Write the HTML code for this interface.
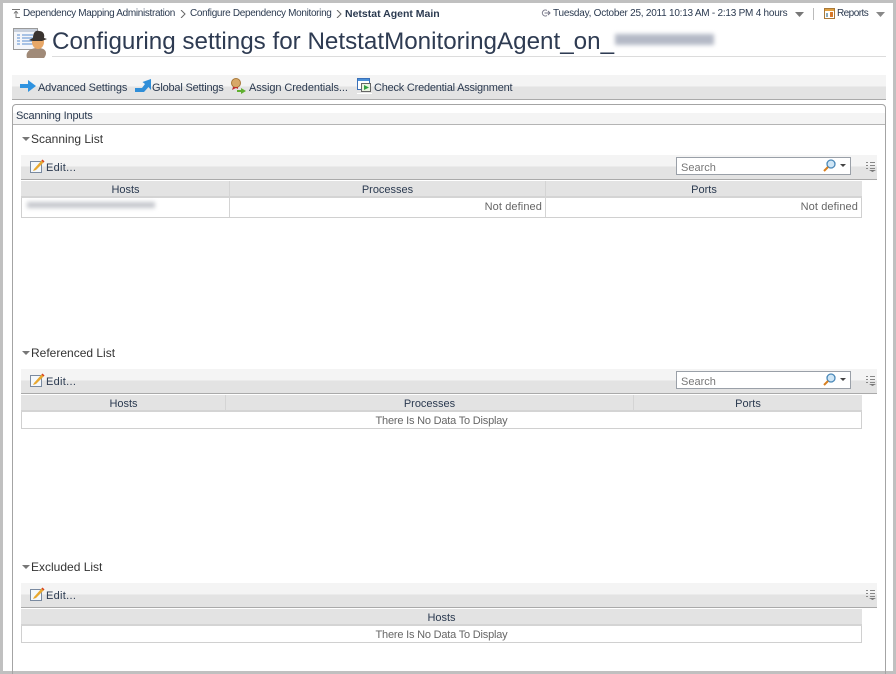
<!DOCTYPE html>
<html><head><meta charset="utf-8"><style>
html,body{margin:0;padding:0;background:#fff}
#p{position:relative;width:896px;height:674px;overflow:hidden;background:#fff;font-family:"Liberation Sans",sans-serif;font-size:11px;color:#2b3a50}
#p div,#p svg{position:absolute}
.t{white-space:nowrap;line-height:14px;height:14px}
.n{font-size:10px;letter-spacing:-.33px}
.m{letter-spacing:-.15px}
.e{letter-spacing:.3px}
.g{background:#c0c0c0}
.bar{background:linear-gradient(#f4f4f4 0,#f4f4f4 11px,#e3e3e3 12px,#e3e3e3 100%);border-bottom:1px solid #aaa}
.th{background:#e3e3e3;border-bottom:2px solid #d4d4d4;height:15px}
.c{text-align:center}
.h{font-size:12px;color:#333}
.d{color:#666;letter-spacing:.1px}
.z{color:#666;letter-spacing:-.2px}
.s{background:#fff;border:1px solid #9aa0a8;width:173px;height:16px}
.b{filter:blur(2px);background:#a9adb8}
</style></head><body><div id="p">
<div class="g" style="left:0;top:0;width:896px;height:3px"></div>
<div class="g" style="left:0;top:0;width:3px;height:674px"></div>
<div class="g" style="left:893px;top:0;width:3px;height:674px"></div>
<div class="g" style="left:0;top:671px;width:896px;height:3px"></div>

<svg style="left:12px;top:9px" width="9" height="9" viewBox="0 0 9 9"><path d="M0 .5H8M4 2L2 4.500M4 2L6 4.500M4 2V8.500H8" fill="none" stroke="#777" stroke-width="1"/></svg>
<div class="t n" style="left:23px;top:7px">Dependency Mapping Administration</div>
<svg style="left:180px;top:10px" width="6" height="8"><path d="M1 0L5 4L1 8" fill="none" stroke="#666"/></svg>
<div class="t n" style="left:190px;top:7px">Configure Dependency Monitoring</div>
<svg style="left:336px;top:10px" width="6" height="8"><path d="M1 0L5 4L1 8" fill="none" stroke="#666"/></svg>
<div class="t" style="left:345px;top:7px;font-weight:bold;font-size:10.500px">Netstat Agent Main</div>

<svg style="left:541px;top:9px" width="10" height="9"><path d="M6 1.500A3 3 0 1 0 6 6.500M3.500 4H9M7 2L9 4L7 6" fill="none" stroke="#778" stroke-width="1"/></svg>
<div class="t n" style="left:553px;top:7px;letter-spacing:-.235px">Tuesday, October 25, 2011 10:13 AM - 2:13 PM 4 hours</div>
<svg style="left:795px;top:12px" width="9" height="5"><path d="M0 0H9L4.500 5Z" fill="#777"/></svg>
<div style="left:813px;top:8px;width:1px;height:12px;background:#bbb"></div>
<svg style="left:824px;top:8px" width="11" height="11"><rect x=".5" y=".5" width="10" height="10" fill="#fff" stroke="#a87838"/><rect x="1" y="1" width="9" height="2" fill="#e0a040"/><rect x="2" y="5" width="2" height="4" fill="#8ab"/><rect x="6" y="4" width="3" height="5" fill="#d87828"/></svg>
<div class="t n" style="left:837px;top:7px;letter-spacing:-.55px">Reports</div>
<svg style="left:876px;top:12px" width="9" height="5"><path d="M0 0H9L4.500 5Z" fill="#888"/></svg>

<svg style="left:12px;top:27px" width="36" height="32" viewBox="0 0 36 32">
<rect x="1.500" y="1.500" width="24" height="21" fill="#f4f6fa" stroke="#9a9a9a"/><rect x="2" y="2" width="23" height="3" fill="#c8d0dc"/>
<path d="M5 8H8M10 8H21M5 11H8M10 11H21M5 14H8M10 14H21M5 17H8M10 17H21" stroke="#5a8fd0"/>
<path d="M15 31C13 25 18 21 26 21C34 21 36 26 32 31Z" fill="#a08a78"/>
<ellipse cx="26" cy="15" rx="6" ry="7" fill="#e8a868"/>
<path d="M17 13L21 11C21 5 24 3 27 4C31 4 33 7 32 11L35 12L30 14H21Z" fill="#3a3430"/></svg>

<div class="t" style="left:52px;top:27px;height:30px;line-height:30px;font-size:24.200px;color:#2e3b52">Configuring settings for NetstatMonitoringAgent_on_</div>
<div class="b" style="left:615px;top:34px;width:99px;height:11px;background:#b4b9c6"></div>
<div style="left:52px;top:56px;width:834px;height:1px;background:#dcdcdc"></div>

<div class="bar" style="left:12px;top:75px;width:874px;height:24px"></div>
<svg style="left:20px;top:79px" width="16" height="14"><path d="M0 5H8V1L16 7L8 13V9H0Z" fill="#2f93e0"/></svg>
<div class="t m" style="left:38px;top:81px">Advanced Settings</div>
<svg style="left:135px;top:79px" width="16" height="14"><path d="M0 9H7L10 5L7.500 3L16 0V11L13.500 8L9 13H0Z" fill="#2f8ed8"/></svg>
<div class="t m" style="left:152px;top:81px;letter-spacing:-.2px">Global Settings</div>
<svg style="left:231px;top:78px" width="16" height="16"><circle cx="5" cy="5" r="4.500" fill="#d8a868" stroke="#a87838"/><path d="M2 9L1 12L5 10L7 11V9Z" fill="#c03030"/><path d="M6 12H10V10L15 13L10 16V14H6Z" fill="#60b030"/></svg>
<div class="t m" style="left:249px;top:81px;letter-spacing:-.1px">Assign Credentials...</div>
<svg style="left:357px;top:78px" width="15" height="16"><rect x=".5" y=".5" width="12" height="11" fill="#fff" stroke="#3a70b8"/><rect x="1" y="1" width="11" height="2" fill="#4a90d8"/><rect x="4.500" y="5.500" width="9" height="8" fill="#eaf4e0" stroke="#666"/><path d="M7 7L12 9.500L7 12Z" fill="#30a040"/><rect x="0" y="15" width="15" height="1" fill="#fff"/></svg>
<div class="t m" style="left:374px;top:81px;letter-spacing:-.22px">Check Credential Assignment</div>

<div style="left:12px;top:104px;width:872px;height:580px;border:1px solid #a4a4a4;border-radius:4px 4px 0 0"></div>
<div style="left:13px;top:113px;width:872px;height:11px;background:#f4f4f4"></div>
<div style="left:13px;top:124px;width:872px;height:1px;background:#b4b4b4"></div>
<div class="t m" style="left:16px;top:109px">Scanning Inputs</div>

<svg style="left:22px;top:137px" width="8" height="4"><path d="M0 0H8L4 4Z" fill="#777"/></svg>
<div class="t h" style="left:31px;top:132px">Scanning List</div>
<div class="bar" style="left:21px;top:155px;width:856px;height:24px"></div>
<svg style="left:30px;top:159px" width="15" height="15"><rect x=".5" y="2.500" width="11" height="11" fill="#f4f8fc" stroke="#7a8aa0"/><path d="M4 10L12 1L14 3L6 11L3 12Z" fill="#e8a830"/><path d="M12 1L14 3" stroke="#d84020" stroke-width="1.500"/></svg>
<div class="t e" style="left:46px;top:161px">Edit...</div>
<div class="s" style="left:676px;top:157px"></div>
<div class="t" style="left:681px;top:161px;color:#777">Search</div>
<svg style="left:823px;top:159px" width="13" height="13"><circle cx="8" cy="5" r="4" fill="#cfe6f6" stroke="#4a88b8" stroke-width="1.300"/><path d="M5 8L1 12" stroke="#d88020" stroke-width="2"/></svg>
<svg style="left:840px;top:164px" width="6" height="3"><path d="M0 0H6L3 3Z" fill="#444"/></svg>
<svg style="left:866px;top:162px" width="10" height="10"><path d="M0 .5H2M4 .5H9M0 3.500H2M4 3.500H9M0 6.500H2M4 6.500H9" stroke="#888"/><path d="M3 8H10L6.500 10Z" fill="#777"/></svg>

<div class="th" style="left:21px;top:181px;width:841px"></div>
<div style="left:229px;top:181px;width:1px;height:36px;background:#d4d4d4"></div>
<div style="left:545px;top:181px;width:1px;height:36px;background:#d4d4d4"></div>
<div class="t c" style="left:22px;top:183px;width:207px">Hosts</div>
<div class="t c" style="left:230px;top:183px;width:315px">Processes</div>
<div class="t c" style="left:546px;top:183px;width:316px">Ports</div>
<div style="left:21px;top:198px;width:1px;height:20px;background:#d0d0d0"></div>
<div style="left:861px;top:198px;width:1px;height:20px;background:#d0d0d0"></div>
<div style="left:21px;top:217px;width:841px;height:1px;background:#d0d0d0"></div>
<div class="b" style="left:27px;top:202px;width:128px;height:6px;background:#c4c6cc"></div>
<div class="t d" style="left:400px;top:200px;width:142px;text-align:right">Not defined</div>
<div class="t d" style="left:716px;top:200px;width:142px;text-align:right">Not defined</div>

<svg style="left:22px;top:351px" width="8" height="4"><path d="M0 0H8L4 4Z" fill="#777"/></svg>
<div class="t h" style="left:31px;top:346px">Referenced List</div>
<div class="bar" style="left:21px;top:369px;width:856px;height:24px"></div>
<svg style="left:30px;top:373px" width="15" height="15"><rect x=".5" y="2.500" width="11" height="11" fill="#f4f8fc" stroke="#7a8aa0"/><path d="M4 10L12 1L14 3L6 11L3 12Z" fill="#e8a830"/><path d="M12 1L14 3" stroke="#d84020" stroke-width="1.500"/></svg>
<div class="t e" style="left:46px;top:375px">Edit...</div>
<div class="s" style="left:676px;top:371px"></div>
<div class="t" style="left:681px;top:375px;color:#777">Search</div>
<svg style="left:823px;top:373px" width="13" height="13"><circle cx="8" cy="5" r="4" fill="#cfe6f6" stroke="#4a88b8" stroke-width="1.300"/><path d="M5 8L1 12" stroke="#d88020" stroke-width="2"/></svg>
<svg style="left:840px;top:378px" width="6" height="3"><path d="M0 0H6L3 3Z" fill="#444"/></svg>
<svg style="left:866px;top:376px" width="10" height="10"><path d="M0 .5H2M4 .5H9M0 3.500H2M4 3.500H9M0 6.500H2M4 6.500H9" stroke="#888"/><path d="M3 8H10L6.500 10Z" fill="#777"/></svg>

<div class="th" style="left:21px;top:395px;width:841px"></div>
<div style="left:225px;top:395px;width:1px;height:15px;background:#d4d4d4"></div>
<div style="left:633px;top:395px;width:1px;height:15px;background:#d4d4d4"></div>
<div class="t c" style="left:22px;top:397px;width:203px">Hosts</div>
<div class="t c" style="left:226px;top:397px;width:407px">Processes</div>
<div class="t c" style="left:634px;top:397px;width:228px">Ports</div>
<div style="left:21px;top:412px;width:1px;height:17px;background:#d0d0d0"></div>
<div style="left:861px;top:412px;width:1px;height:17px;background:#d0d0d0"></div>
<div style="left:21px;top:428px;width:841px;height:1px;background:#d0d0d0"></div>
<div class="t c z" style="left:21px;top:414px;width:841px">There Is No Data To Display</div>

<svg style="left:22px;top:565px" width="8" height="4"><path d="M0 0H8L4 4Z" fill="#777"/></svg>
<div class="t h" style="left:31px;top:560px">Excluded List</div>
<div class="bar" style="left:21px;top:583px;width:856px;height:24px"></div>
<svg style="left:30px;top:587px" width="15" height="15"><rect x=".5" y="2.500" width="11" height="11" fill="#f4f8fc" stroke="#7a8aa0"/><path d="M4 10L12 1L14 3L6 11L3 12Z" fill="#e8a830"/><path d="M12 1L14 3" stroke="#d84020" stroke-width="1.500"/></svg>
<div class="t e" style="left:46px;top:589px">Edit...</div>
<svg style="left:866px;top:590px" width="10" height="10"><path d="M0 .5H2M4 .5H9M0 3.500H2M4 3.500H9M0 6.500H2M4 6.500H9" stroke="#888"/><path d="M3 8H10L6.500 10Z" fill="#777"/></svg>

<div class="th" style="left:21px;top:609px;width:841px"></div>
<div class="t c" style="left:21px;top:611px;width:841px">Hosts</div>
<div style="left:21px;top:626px;width:1px;height:17px;background:#d0d0d0"></div>
<div style="left:861px;top:626px;width:1px;height:17px;background:#d0d0d0"></div>
<div style="left:21px;top:642px;width:841px;height:1px;background:#d0d0d0"></div>
<div class="t c z" style="left:21px;top:628px;width:841px">There Is No Data To Display</div>
</div></body></html>
